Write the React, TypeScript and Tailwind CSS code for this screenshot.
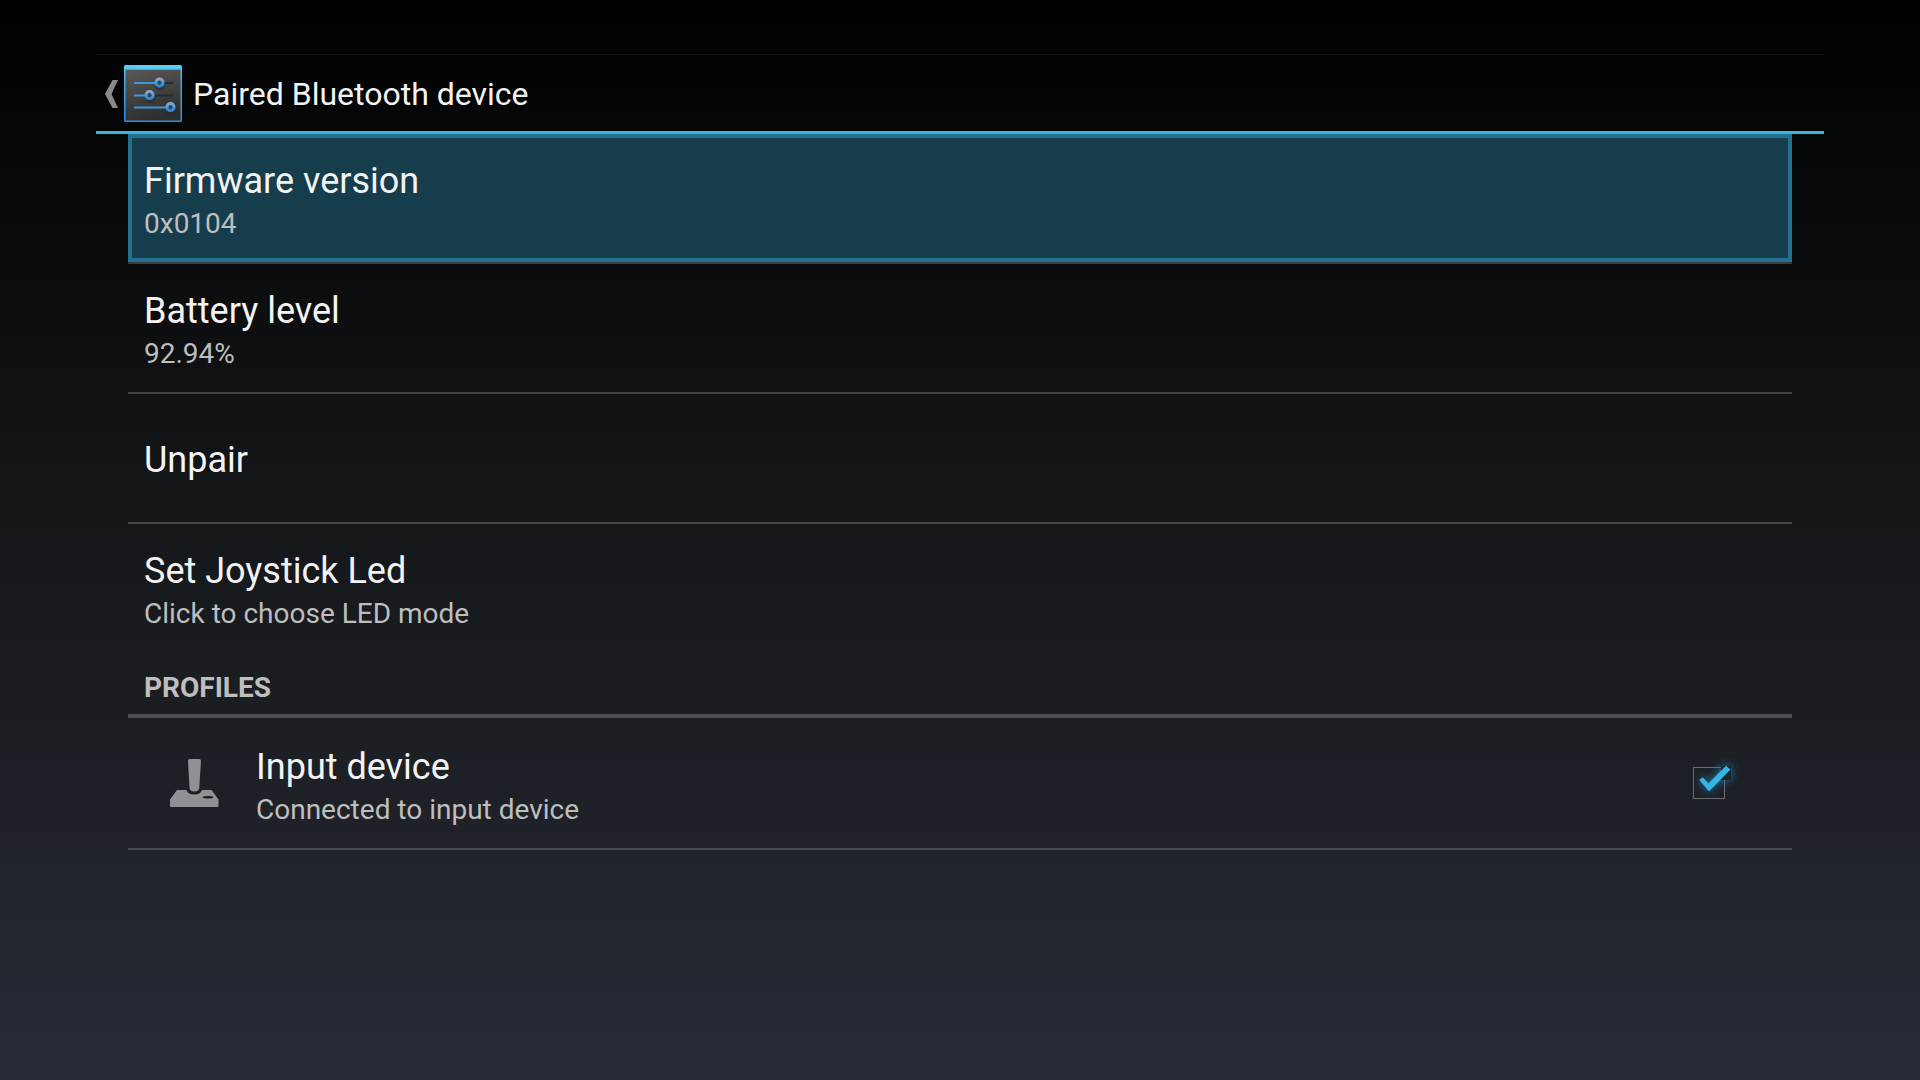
import { useState } from "react";
import type { ReactNode } from "react";

function SettingsIcon() {
  return (
    <svg viewBox="0 0 60 60" className="size-[60px]" aria-hidden="true">
      <defs>
        <linearGradient id="frame" x1="0" y1="0" x2="0" y2="1">
          <stop offset="0" stopColor="#5bd0f8" />
          <stop offset="0.3" stopColor="#3fa9e6" />
          <stop offset="1" stopColor="#2f8be0" />
        </linearGradient>
        <linearGradient id="plate" x1="0" y1="0" x2="0.3" y2="1">
          <stop offset="0" stopColor="#5a5a58" />
          <stop offset="1" stopColor="#2f2f2f" />
        </linearGradient>
        <linearGradient id="knob" x1="0" y1="0" x2="0" y2="1">
          <stop offset="0" stopColor="#8aa6c4" />
          <stop offset="0.5" stopColor="#4a9be0" />
          <stop offset="1" stopColor="#2a86dc" />
        </linearGradient>
      </defs>
      <rect x="1" y="1" width="58" height="57" rx="1.5" fill="url(#frame)" />
      <rect x="2.5" y="5" width="55" height="51.5" fill="url(#plate)" />
      <rect x="2.5" y="5" width="55" height="1" fill="#8b9296" />
      <path d="M36 19H50M26 31.5H50" stroke="#1f2c3a" strokeWidth="2.2" />
      <path d="M11 19H36M11 31.5H26M11 43.5H47" stroke="#3f97dc" strokeWidth="2.2" />
      <g fill="none" stroke="#262626" strokeWidth="4" opacity="0.5">
        <circle cx="37" cy="21" r="3.5" />
        <circle cx="27" cy="33.5" r="3.5" />
        <circle cx="48" cy="45.5" r="3.5" />
      </g>
      <g fill="#3d4145" stroke="url(#knob)" strokeWidth="3">
        <circle cx="36.5" cy="18.7" r="3.6" />
        <circle cx="26.5" cy="31.2" r="3.6" />
        <circle cx="47.5" cy="43.2" r="3.6" />
      </g>
    </svg>
  );
}

function JoystickIcon() {
  return (
    <svg viewBox="0 1 50 50" className="size-[50px]" fill="#909193" aria-hidden="true">
      <path d="M19 3Q19 1 21 1H30Q32 1 32 3L30.2 30.5Q29.5 33.500 25.5 33.5Q21.2 33.5 20.6 30.5Z" />
      <path
        fillRule="evenodd"
        d="M8 32H17.5Q19 36.5 25.3 36.5Q31.5 36.5 33 32H42.5L49.5 41.5V48Q49.5 49 48.5 49H2Q1 49 1 48V41.5ZM33.500 39.3Q34 40.6 39 40.6Q44 40.6 44.5 39.3Q44 38 39 38Q34 38 33.5 39.3Z"
      />
    </svg>
  );
}

function CheckMark() {
  return (
    <svg
      viewBox="0 -1 64 64"
      className="pointer-events-none absolute -inset-4 size-16 drop-shadow-[0_0_5px_#1c7fab]"
      aria-hidden="true"
    >
      <path d="M44 14H54V28H44Z" fill="#1b252b" />
      <path d="M22.2 28L25.5 25.2L31.5 31.2L49 13.8L53.5 17.5L32 39.5Z" fill="#33b5e5" />
    </svg>
  );
}

function Texts({ title, summary }: { title: string; summary?: string }) {
  return (
    <span className="flex flex-col pt-1 text-left">
      <span className="text-4xl leading-[48px] text-[#f3f3f3]">{title}</span>
      {summary && <span className="text-[28px] leading-[38px] text-[#bebebe]">{summary}</span>}
    </span>
  );
}

function Row({ children, selected }: { children: ReactNode; selected?: boolean }) {
  return (
    <button
      type="button"
      className={
        selected
          ? "flex min-h-32 w-full items-center border-4 border-[#23708f] bg-[#163d4c] px-3 outline-none"
          : "flex min-h-32 w-full items-center px-4 outline-none"
      }
    >
      {children}
    </button>
  );
}

export default function App() {
  const [enabled, setEnabled] = useState(true);
  return (
    <div className="min-h-screen bg-linear-to-b/srgb from-black via-[#15181b] to-[#272b34] px-[5%] pt-[54px] font-[Roboto,sans-serif]">
      <header className="flex h-20 items-center border-t border-b-3 border-t-[#0e0f10] border-b-[#33b5e5] pt-0.5 pl-2">
        <button type="button" aria-label="Navigate up" className="flex items-center gap-1">
          <svg viewBox="0 0 15 30" className="h-[30px] w-[15px]" aria-hidden="true">
            <path d="M8.500 1H14L7.500 15L14 29H8.500L1 15Z" fill="#8a8a8a" />
          </svg>
          <SettingsIcon />
        </button>
        <h1 className="ml-2.5 text-[32px] leading-10 text-[#f3f3f3]">Paired Bluetooth device</h1>
      </header>

      <main className="px-8">
        <ul className="divide-y-2 divide-white/20">
          <li>
            <Row selected>
              <Texts title="Firmware version" summary="0x0104" />
            </Row>
          </li>
          <li>
            <Row>
              <Texts title="Battery level" summary="92.94%" />
            </Row>
          </li>
          <li>
            <Row>
              <Texts title="Unpair" />
            </Row>
          </li>
          <li>
            <Row>
              <Texts title="Set Joystick Led" summary="Click to choose LED mode" />
            </Row>
          </li>
        </ul>

        <h2 className="mt-0.5 flex h-16 items-center border-b-4 border-[#4b4f52] px-4 pt-2 text-[28px] leading-9 font-bold text-[#bebebe]">
          PROFILES
        </h2>

        <label className="mt-0.5 flex min-h-[130px] items-center border-b-2 border-[#46494d] pr-[67px] pl-[41px]">
          <JoystickIcon />
          <span className="ml-[37px] flex-1">
            <Texts title="Input device" summary="Connected to input device" />
          </span>
          <span className="relative mb-0.5 flex size-8">
            <input
              type="checkbox"
              checked={enabled}
              onChange={(e) => setEnabled(e.target.checked)}
              className="size-8 appearance-none border border-[#6a6e71] outline-none"
            />
            {enabled && <CheckMark />}
          </span>
        </label>
      </main>
    </div>
  );
}
